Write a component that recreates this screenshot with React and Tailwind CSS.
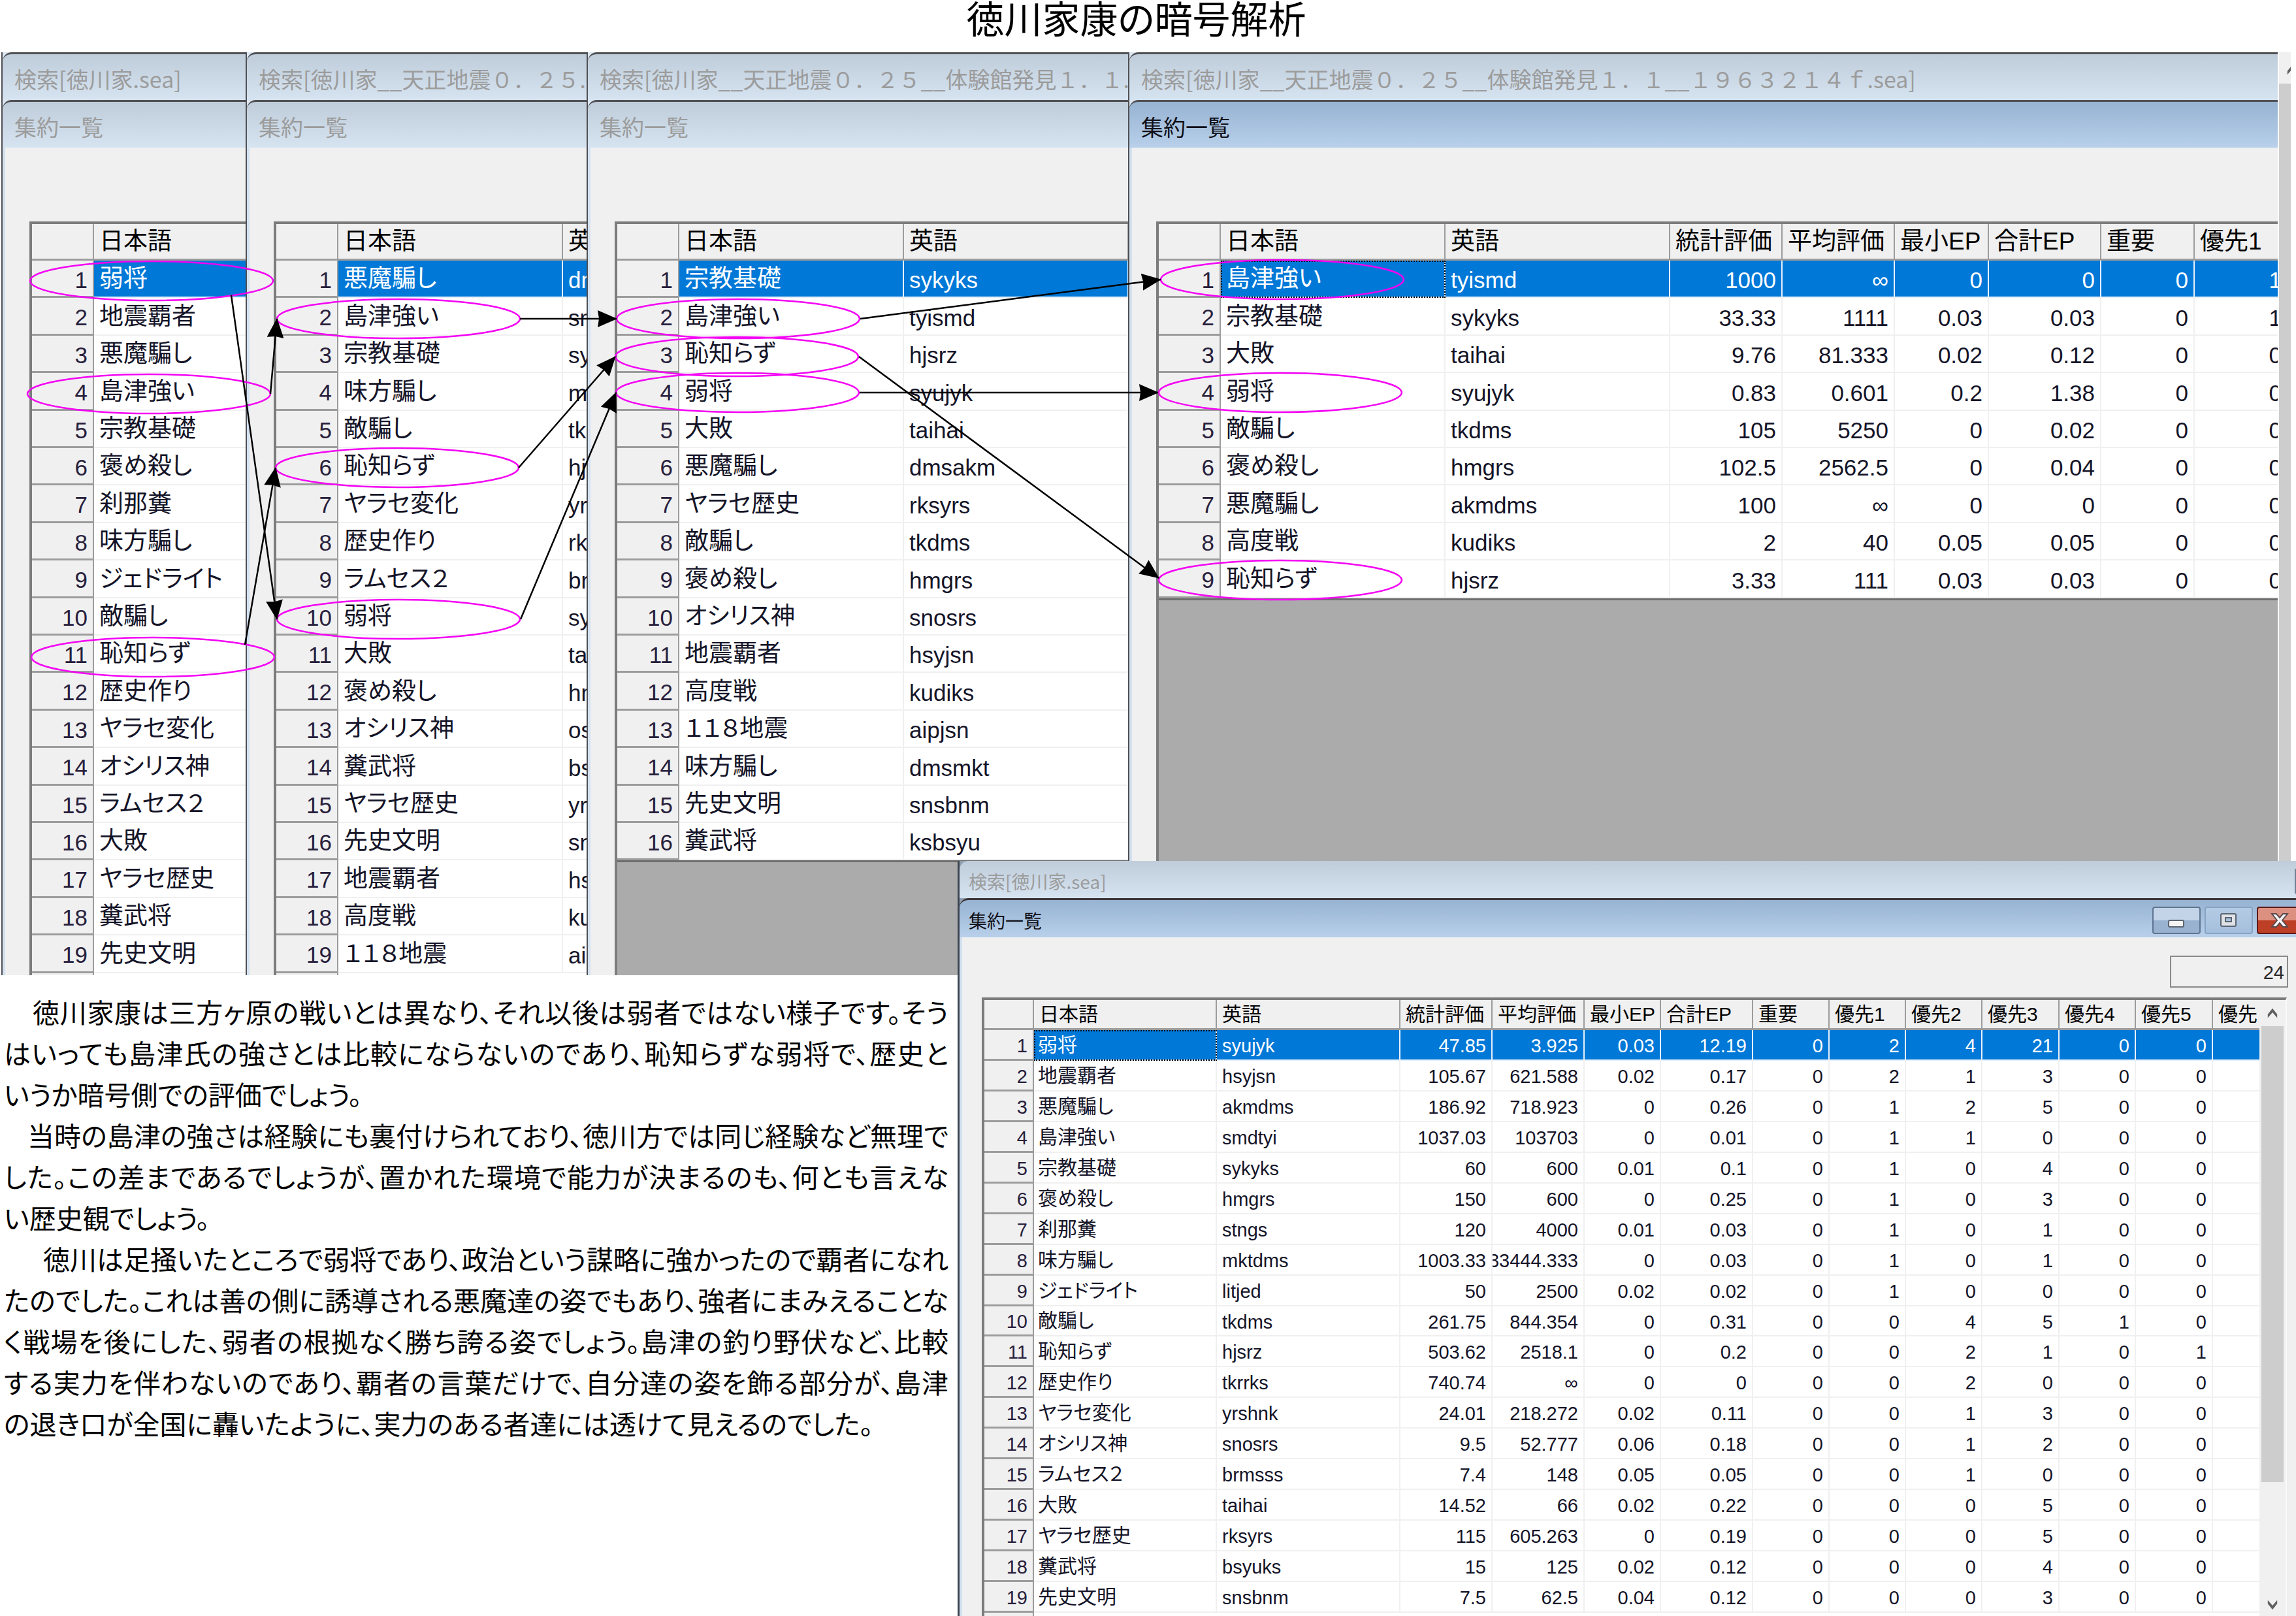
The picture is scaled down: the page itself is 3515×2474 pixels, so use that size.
const FIRST_ROWS = [
  ['弱将'],
  ['地震覇者'],
  ['悪魔騙し'],
  ['島津強い'],
  ['宗教基礎'],
  ['褒め殺し'],
  ['刹那糞'],
  ['味方騙し'],
  ['ジェドライト'],
  ['敵騙し'],
  ['恥知らず'],
  ['歴史作り'],
  ['ヤラセ変化'],
  ['オシリス神'],
  ['ラムセス２'],
  ['大敗'],
  ['ヤラセ歴史'],
  ['糞武将'],
  ['先史文明'],
]

const SECOND_ROWS = [
  ['悪魔騙し', 'dmsakm'],
  ['島津強い', 'smdtyi'],
  ['宗教基礎', 'sykyks'],
  ['味方騙し', 'mktdms'],
  ['敵騙し', 'tkdms'],
  ['恥知らず', 'hjsrz'],
  ['ヤラセ変化', 'yrshnk'],
  ['歴史作り', 'rkstkr'],
  ['ラムセス２', 'brmsss'],
  ['弱将', 'syujyk'],
  ['大敗', 'taihai'],
  ['褒め殺し', 'hmgrs'],
  ['オシリス神', 'ossrs'],
  ['糞武将', 'bsyuks'],
  ['ヤラセ歴史', 'yrrks'],
  ['先史文明', 'snsbnm'],
  ['地震覇者', 'hsyjsn'],
  ['高度戦', 'kudiks'],
  ['１１８地震', 'aipjsn'],
]

const THIRD_ROWS = [
  ['宗教基礎', 'sykyks'],
  ['島津強い', 'tyismd'],
  ['恥知らず', 'hjsrz'],
  ['弱将', 'syujyk'],
  ['大敗', 'taihai'],
  ['悪魔騙し', 'dmsakm'],
  ['ヤラセ歴史', 'rksyrs'],
  ['敵騙し', 'tkdms'],
  ['褒め殺し', 'hmgrs'],
  ['オシリス神', 'snosrs'],
  ['地震覇者', 'hsyjsn'],
  ['高度戦', 'kudiks'],
  ['１１８地震', 'aipjsn'],
  ['味方騙し', 'dmsmkt'],
  ['先史文明', 'snsbnm'],
  ['糞武将', 'ksbsyu'],
]

const FOURTH_ROWS = [
  ['島津強い', 'tyismd', '1000', '∞', '0', '0', '0', '1'],
  ['宗教基礎', 'sykyks', '33.33', '1111', '0.03', '0.03', '0', '1'],
  ['大敗', 'taihai', '9.76', '81.333', '0.02', '0.12', '0', '0'],
  ['弱将', 'syujyk', '0.83', '0.601', '0.2', '1.38', '0', '0'],
  ['敵騙し', 'tkdms', '105', '5250', '0', '0.02', '0', '0'],
  ['褒め殺し', 'hmgrs', '102.5', '2562.5', '0', '0.04', '0', '0'],
  ['悪魔騙し', 'akmdms', '100', '∞', '0', '0', '0', '0'],
  ['高度戦', 'kudiks', '2', '40', '0.05', '0.05', '0', '0'],
  ['恥知らず', 'hjsrz', '3.33', '111', '0.03', '0.03', '0', '0'],
]

const SUMMARY_ROWS = [
  ['弱将', 'syujyk', '47.85', '3.925', '0.03', '12.19', '0', '2', '4', '21', '0', '0', ''],
  ['地震覇者', 'hsyjsn', '105.67', '621.588', '0.02', '0.17', '0', '2', '1', '3', '0', '0', ''],
  ['悪魔騙し', 'akmdms', '186.92', '718.923', '0', '0.26', '0', '1', '2', '5', '0', '0', ''],
  ['島津強い', 'smdtyi', '1037.03', '103703', '0', '0.01', '0', '1', '1', '0', '0', '0', ''],
  ['宗教基礎', 'sykyks', '60', '600', '0.01', '0.1', '0', '1', '0', '4', '0', '0', ''],
  ['褒め殺し', 'hmgrs', '150', '600', '0', '0.25', '0', '1', '0', '3', '0', '0', ''],
  ['刹那糞', 'stngs', '120', '4000', '0.01', '0.03', '0', '1', '0', '1', '0', '0', ''],
  ['味方騙し', 'mktdms', '1003.33', '33444.333', '0', '0.03', '0', '1', '0', '1', '0', '0', ''],
  ['ジェドライト', 'litjed', '50', '2500', '0.02', '0.02', '0', '1', '0', '0', '0', '0', ''],
  ['敵騙し', 'tkdms', '261.75', '844.354', '0', '0.31', '0', '0', '4', '5', '1', '0', ''],
  ['恥知らず', 'hjsrz', '503.62', '2518.1', '0', '0.2', '0', '0', '2', '1', '0', '1', ''],
  ['歴史作り', 'tkrrks', '740.74', '∞', '0', '0', '0', '0', '2', '0', '0', '0', ''],
  ['ヤラセ変化', 'yrshnk', '24.01', '218.272', '0.02', '0.11', '0', '0', '1', '3', '0', '0', ''],
  ['オシリス神', 'snosrs', '9.5', '52.777', '0.06', '0.18', '0', '0', '1', '2', '0', '0', ''],
  ['ラムセス２', 'brmsss', '7.4', '148', '0.05', '0.05', '0', '0', '1', '0', '0', '0', ''],
  ['大敗', 'taihai', '14.52', '66', '0.02', '0.22', '0', '0', '0', '5', '0', '0', ''],
  ['ヤラセ歴史', 'rksyrs', '115', '605.263', '0', '0.19', '0', '0', '0', '5', '0', '0', ''],
  ['糞武将', 'bsyuks', '15', '125', '0.02', '0.12', '0', '0', '0', '4', '0', '0', ''],
  ['先史文明', 'snsbnm', '7.5', '62.5', '0.04', '0.12', '0', '0', '0', '3', '0', '0', ''],
]

const JAPANESE = { label: '日本語', width: 'w-[344px]' }
const ENGLISH = { label: '英語', width: 'w-[344px]' }

const RESULT_COLUMNS = [
  JAPANESE,
  ENGLISH,
  { label: '統計評価', width: 'w-[172px]' },
  { label: '平均評価', width: 'w-[172px]' },
  { label: '最小EP', width: 'w-[144px]' },
  { label: '合計EP', width: 'w-[172px]' },
  { label: '重要', width: 'w-[143px]' },
  { label: '優先1', width: 'w-[143px]' },
]

const SUMMARY_COLUMNS = [
  { label: '日本語', width: 'w-[280px]' },
  { label: '英語', width: 'w-[281px]' },
  { label: '統計評価', width: 'w-[141px]' },
  { label: '平均評価', width: 'w-[141px]' },
  { label: '最小EP', width: 'w-[117px]' },
  { label: '合計EP', width: 'w-[141px]' },
  { label: '重要', width: 'w-[117px]' },
  { label: '優先1', width: 'w-[117px]' },
  { label: '優先2', width: 'w-[117px]' },
  { label: '優先3', width: 'w-[118px]' },
  { label: '優先4', width: 'w-[117px]' },
  { label: '優先5', width: 'w-[118px]' },
  { label: '優先', width: 'w-[117px]' },
]

const LARGE = {
  corner: 'w-[95px]',
  index: 'pt-1 pr-2 text-[35px]',
  head: 'h-[56px] px-2 py-0 text-[37px]',
  row: 'h-[57px] nth-[5n+2]:h-[58px] nth-[5n+4]:h-[58px]',
  japanese: 'pl-2 text-[37px]',
  text: 'pt-1 pl-2 text-[35px]',
  number: 'pt-1 pr-2 text-[35px]',
}

const SMALL = {
  corner: 'w-[76px]',
  index: 'pt-1 pr-2 text-[29px]',
  head: 'h-[46px] px-2 py-0 text-[30px]',
  row: 'h-[47px] nth-[10n]:h-[46px]',
  japanese: 'pl-[6px] text-[30px]',
  text: 'pt-1 pl-2 text-[29px]',
  number: 'pt-1 pr-2 text-[29px]',
}

const ELLIPSES = [
  [232, 430],
  [228, 603],
  [234, 1006],
  [610, 488],
  [608, 716],
  [610, 948],
  [1130, 488],
  [1128, 546],
  [1129, 601],
  [1963, 428],
  [1960, 601],
  [1960, 888],
]

const ARROWS = [
  [354, 452, 424, 948],
  [414, 603, 424, 488],
  [375, 987, 422, 716],
  [796, 488, 944, 488],
  [794, 716, 942, 546],
  [797, 948, 943, 601],
  [1317, 488, 1777, 428],
  [1315, 546, 1774, 885],
  [1316, 601, 1773, 601],
]

const ARTICLE = [
  {
    indent: 'indent-[44px]',
    lines: [
      '徳川家康は三方ヶ原の戦いとは異なり、それ以後は弱者ではない様子です。そう',
      'はいっても島津氏の強さとは比較にならないのであり、恥知らずな弱将で、歴史と',
      'いうか暗号側での評価でしょう。',
    ],
  },
  {
    indent: 'indent-[36px]',
    lines: [
      '当時の島津の強さは経験にも裏付けられており、徳川方では同じ経験など無理で',
      'した。この差まであるでしょうが、置かれた環境で能力が決まるのも、何とも言えな',
      'い歴史観でしょう。',
    ],
  },
  {
    indent: 'indent-[60px]',
    lines: [
      '徳川は足掻いたところで弱将であり、政治という謀略に強かったので覇者になれ',
      'たのでした。これは善の側に誘導される悪魔達の姿でもあり、強者にまみえることな',
      'く戦場を後にした、弱者の根拠なく勝ち誇る姿でしょう。島津の釣り野伏など、比較',
      'する実力を伴わないのであり、覇者の言葉だけで、自分達の姿を飾る部分が、島津',
      'の退き口が全国に轟いたように、実力のある者達には透けて見えるのでした。',
    ],
  },
]

function Cell({ selected, focused, align, className, children }) {
  return (
    <td
      className={`overflow-hidden border-r-2 border-b-2 p-0 ${
        selected ? 'border-[#e8f1fa] bg-[#0078d7] text-white' : 'border-[#f0f0f0] bg-white text-[#141428]'
      } ${focused ? 'outline-2 -outline-offset-2 outline-dotted outline-black' : ''}`}
    >
      <div className={`flex ${align} ${className}`}>{children}</div>
    </td>
  )
}

function Grid({ columns, rows, size, width, focus, closed }) {
  return (
    <table
      className={`table-fixed border-separate border-spacing-0 border-[#6e6e6e] leading-none whitespace-nowrap ${
        closed ? 'border-b-3' : ''
      } ${width}`}
    >
      <thead>
        <tr>
          <th className={`border-r-2 border-b-3 border-[#9c9c9c] bg-[#f0f0f0] ${size.corner}`}></th>
          {columns.map((column) => (
            <th
              key={column.label}
              className={`overflow-hidden border-r-2 border-b-3 border-[#9c9c9c] bg-[#f0f0f0] text-left font-normal text-black ${size.head} ${column.width}`}
            >
              {column.label}
            </th>
          ))}
        </tr>
      </thead>
      <tbody>
        {rows.map((row, i) => (
          <tr key={i} className={size.row}>
            <th
              className={`border-r-2 border-b-3 border-[#9c9c9c] bg-[#f0f0f0] pb-0 pl-0 text-right font-normal text-[#28203c] ${size.index}`}
            >
              {i + 1}
            </th>
            {row.map((value, j) => (
              <Cell
                key={j}
                selected={i === 0}
                focused={focus && i === 0 && j === 0}
                align={j < 2 ? 'justify-start' : 'justify-end'}
                className={j === 0 ? size.japanese : j === 1 ? size.text : size.number}
              >
                {value}
              </Cell>
            ))}
          </tr>
        ))}
      </tbody>
    </table>
  )
}

function TitleBar({ active, className, children }) {
  return (
    <div
      className={`flex shrink-0 items-center overflow-hidden rounded-tl-[14px] pt-1 font-['Noto_Sans_CJK_JP',sans-serif] whitespace-nowrap [font-feature-settings:normal] ${
        active
          ? 'bg-linear-to-b from-[#97b3d2] to-[#b8d0ea] text-[#101018]'
          : 'bg-linear-to-b from-[#bfccda] to-[#d6e4f1] text-[#9c9c9c]'
      } ${className}`}
    >
      {children}
    </div>
  )
}

function ListWindow({ title, active, className, children }) {
  return (
    <section className={`flex flex-col overflow-hidden border-l-2 border-[#505054] bg-[#dce7f2] ${className}`}>
      <TitleBar className="h-[73px] border-t-3 border-[#505054] pl-[18px] text-[34px]">{title}</TitleBar>
      <TitleBar active={active} className="h-[73px] border-t-3 border-[#505054] pl-[18px] text-[34px]">
        集約一覧
      </TitleBar>
      <div className="flex min-h-0 flex-1 border-l-4 border-[#d3e1f0] bg-[#f0f0f0] pt-[113px] pl-[37px]">
        <div className="min-w-0 flex-1 overflow-hidden border-t-4 border-l-4 border-[#7c7c7c] bg-[#ababab]">
          {children}
        </div>
      </div>
    </section>
  )
}

// top edge of the next, scrolled-off row
function RowEdge({ corner }) {
  return (
    <div className="flex h-2">
      <div className={`shrink-0 border-r-2 border-[#9c9c9c] bg-[#f0f0f0] ${corner}`}></div>
      <div className="flex-1 bg-white"></div>
    </div>
  )
}

function Chevron({ className }) {
  return (
    <svg viewBox="0 0 20 20" className={className} fill="#606060">
      <path d="M10 2 L18 12 V18 L10 9 L2 18 V12 Z" />
    </svg>
  )
}

function SummaryWindow() {
  return (
    <section className="relative z-10 -mt-[175px] flex min-w-0 flex-1 flex-col overflow-hidden border-l-3 border-[#3c4450] bg-[#8fa0b0]">
      <TitleBar className="h-[57px] justify-between pl-[14px] text-[28px]">
        検索[徳川家.sea]
        <span className="h-[38px] w-[2px] bg-[#6f7f94]"></span>
      </TitleBar>
      <TitleBar active className="h-[60px] border-t-3 border-[#3c3438] pl-[14px] text-[28px]">
        <h2 className="flex-1">集約一覧</h2>
        <div className="flex gap-[6px]">
          <button
            type="button"
            aria-label="最小化"
            className="flex h-[42px] w-[74px] items-center justify-center rounded-[4px] border-2 border-[#5f7591] bg-linear-to-b from-[#c3d4e8] from-50% to-[#98b2d0] to-50%"
          >
            <svg viewBox="0 0 28 28" className="h-7 w-7">
              <rect x="2" y="14" width="23" height="10" rx="2" fill="#f4f4f4" stroke="#5c6470" strokeWidth="2" />
            </svg>
          </button>
          <button
            type="button"
            aria-label="最大化"
            className="flex h-[42px] w-[74px] items-center justify-center rounded-[4px] border-2 border-[#86a2c4] bg-linear-to-b from-[#b4cbe4] to-[#a4bfdd]"
          >
            <svg viewBox="0 0 28 28" className="h-7 w-7">
              <rect x="2" y="4" width="23" height="19" rx="2" fill="#dfe3e8" stroke="#5c6470" strokeWidth="2" />
              <rect x="9" y="10" width="9" height="6" fill="#a9c2de" stroke="#5c6470" strokeWidth="2" />
            </svg>
          </button>
          <button
            type="button"
            aria-label="閉じる"
            className="flex h-[42px] w-[60px] items-center justify-center rounded-l-[4px] border-2 border-r-0 border-[#5c1a18] bg-linear-to-b from-[#dc9080] from-50% to-[#bd3f26] to-50%"
          >
            <svg viewBox="0 0 28 28" className="ml-2 h-7 w-7">
              <path
                d="M2 4 H9 L14 10 L19 4 H26 L18 14 L26 24 H19 L14 18 L9 24 H2 L10 14 Z"
                fill="#f6f6f6"
                stroke="#5a4a50"
                strokeWidth="2"
              />
            </svg>
          </button>
        </div>
      </TitleBar>
      <div className="flex min-h-0 flex-1 flex-col border-l-4 border-[#d3e1f0] bg-[#f0f0f0] pl-[30px]">
        <div className="flex h-[92px] shrink-0 items-center justify-end pt-[12px] pr-3">
          <input
            type="text"
            readOnly
            aria-label="件数"
            defaultValue="24"
            className="h-[49px] w-[181px] border-2 border-[#8a8a8a] bg-[#f0f0f0] pt-1 pr-1 text-right text-[29px] text-[#282828]"
          />
        </div>
        <div className="mr-[14px] flex min-h-0 flex-1 border-t-4 border-r-2 border-l-4 border-[#7c7c7c] border-r-[#fafafa]">
          <div className="min-w-0 flex-1 overflow-hidden bg-white">
            <Grid columns={SUMMARY_COLUMNS} rows={SUMMARY_ROWS} size={SMALL} width="w-[1981px]" focus />
            <RowEdge corner="w-[76px]" />
          </div>
          <div className="flex w-[40px] flex-col items-center border-x-3 border-[#f0f0f0] bg-[#f0f0f0]">
            <Chevron className="my-[11px] h-[18px] w-5 shrink-0" />
            <div className="h-[698px] w-full shrink-0 bg-[#cdcdcd]"></div>
            <Chevron className="mt-auto mb-2 h-[18px] w-5 shrink-0 rotate-180" />
          </div>
        </div>
      </div>
    </section>
  )
}

function Marks() {
  return (
    <svg width="2200" height="1100" className="pointer-events-none absolute top-0 left-0" fill="none">
      <defs>
        <marker
          id="head"
          markerUnits="userSpaceOnUse"
          markerWidth="30"
          markerHeight="26"
          refX="29"
          refY="13"
          orient="auto"
        >
          <path d="M0 0 L30 13 L0 26 L2 13 Z" fill="#000" />
        </marker>
      </defs>
      {ELLIPSES.map(([cx, cy]) => (
        <ellipse key={`${cx}-${cy}`} cx={cx} cy={cy} rx="186" ry="30" stroke="#f400f4" strokeWidth="2.5" />
      ))}
      {ARROWS.map(([x1, y1, x2, y2]) => (
        <line
          key={`${x1}-${y1}`}
          x1={x1}
          y1={y1}
          x2={x2}
          y2={y2}
          stroke="#000"
          strokeWidth="2.5"
          markerEnd="url(#head)"
        />
      ))}
    </svg>
  )
}

export default function App() {
  return (
    <main
      lang="ja"
      className="relative flex h-screen flex-col overflow-hidden bg-white font-['Liberation_Sans','Noto_Sans_CJK_JP',sans-serif] text-black [font-feature-settings:'palt']"
    >
      <h1 className="h-[80px] shrink-0 pr-9 text-center text-[58px] leading-[62px]">徳川家康の暗号解析</h1>

      <div className="flex h-[1413px] shrink-0">
        <ListWindow title="検索[徳川家.sea]" className="ml-[2px] w-[374px]">
          <Grid columns={[JAPANESE]} rows={FIRST_ROWS} size={LARGE} width="w-[439px]" />
          <RowEdge corner="w-[95px]" />
        </ListWindow>
        <ListWindow title="検索[徳川家__天正地震０．２５.sea]" className="w-[522px]">
          <Grid columns={[JAPANESE, ENGLISH]} rows={SECOND_ROWS} size={LARGE} width="w-[783px]" />
          <RowEdge corner="w-[95px]" />
        </ListWindow>
        <ListWindow title="検索[徳川家__天正地震０．２５__体験館発見１．１.sea]" className="w-[829px]">
          <Grid columns={[JAPANESE, ENGLISH]} rows={THIRD_ROWS} size={LARGE} width="w-[783px]" closed />
        </ListWindow>
        <ListWindow
          title="検索[徳川家__天正地震０．２５__体験館発見１．１__１９６３２１４ｆ.sea]"
          active
          className="min-w-0 flex-1"
        >
          <Grid columns={RESULT_COLUMNS} rows={FOURTH_ROWS} size={LARGE} width="w-[1729px]" focus closed />
        </ListWindow>
        <div className="mr-2 ml-[2px] flex w-[18px] shrink-0 flex-col overflow-hidden bg-[#cdcdcd]">
          <div className="h-[48px] bg-[#f0f0f0] pt-[18px] pl-[10px]">
            <Chevron className="h-[18px] w-5 max-w-none" />
          </div>
        </div>
      </div>

      <div className="flex min-h-0 flex-1">
        <article className="w-[1466px] shrink-0 pt-[28px] pr-[14px] pl-[6px] text-[41px] leading-[63px] whitespace-nowrap">
          {ARTICLE.map((paragraph) => (
            <p key={paragraph.indent}>
              {paragraph.lines.map((line, i) => (
                <span
                  key={line}
                  className={`block ${i === 0 ? paragraph.indent : ''} ${
                    i < paragraph.lines.length - 1 ? '[text-align-last:justify]' : ''
                  }`}
                >
                  {line}
                </span>
              ))}
            </p>
          ))}
        </article>
        <SummaryWindow />
      </div>

      <Marks />
    </main>
  )
}
